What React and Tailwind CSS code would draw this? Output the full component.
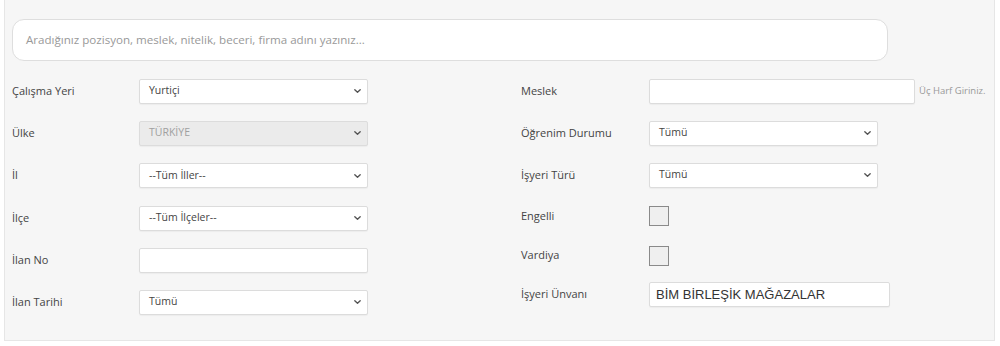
import React from "react";

const font = { fontFamily: '"Open Sans", "Noto Sans", sans-serif' };

function Chevron() {
  return (
    <svg width="9" height="9" viewBox="0 0 10 10" className="pointer-events-none absolute right-[6px] top-1/2 -translate-y-1/2">
      <path d="M2 3.5 L5 6.5 L8 3.5" fill="none" stroke="#555" strokeWidth="1.5" strokeLinecap="round" strokeLinejoin="round" />
    </svg>
  );
}

function Select({ value, width = "w-[229px]", disabled = false }) {
  return (
    <div className={`relative h-[25px] ${width}`}>
      <div
        className={`flex h-full w-full items-center rounded-[2px] border border-[#dcdcdc] pl-[9px] text-[10.5px] shadow-[0_1px_1px_rgba(0,0,0,0.04)] ${
          disabled ? "bg-[#ebebeb] text-[#a0a0a0]" : "bg-white text-[#444]"
        }`}
      >
        {value}
      </div>
      <Chevron />
    </div>
  );
}

function TextInput({ width = "w-[229px]", value = "" }) {
  return (
    <div
      className={`flex h-[25px] ${width} items-center rounded-[2px] border border-[#dcdcdc] bg-white pl-[6px] text-[13px] text-[#333] shadow-[0_1px_1px_rgba(0,0,0,0.04)]`}
      style={value ? { fontFamily: '"Liberation Sans", Arial, sans-serif' } : undefined}
    >
      {value}
    </div>
  );
}

function Check() {
  return <div className="h-[20px] w-[20px] border border-[#8a8a8a] bg-[#efefef]" />;
}

function Row({ label, h, children, labelW }) {
  return (
    <div className={`flex items-center ${h}`}>
      <div className={`${labelW} text-[11px] text-[#444]`}>{label}</div>
      {children}
    </div>
  );
}

export default function App() {
  return (
    <div className="h-[346px] w-[1000px] bg-white" style={font}>
      <div className="ml-[4px] h-[341px] w-[991px] border-x border-b border-[#e6e6e6] bg-[#f6f6f6] pl-[7px] pt-[19px]">
        <div className="flex h-[42px] w-[876px] items-center rounded-[12px] border border-[#dedede] bg-white pl-[13px] text-[11.6px] text-[#999]">
          Aradığınız pozisyon, meslek, nitelik, beceri, firma adını yazınız...
        </div>
        <div className="mt-[9px] flex">
          <div className="flex w-[509px] flex-col">
            <Row label="Çalışma Yeri" h="h-[42px]" labelW="w-[127px]">
              <Select value="Yurtiçi" />
            </Row>
            <Row label="Ülke" h="h-[42px]" labelW="w-[127px]">
              <Select value="TÜRKİYE" disabled />
            </Row>
            <Row label="İl" h="h-[43px]" labelW="w-[127px]">
              <Select value="--Tüm İller--" />
            </Row>
            <Row label="İlçe" h="h-[42px]" labelW="w-[127px]">
              <Select value="--Tüm İlçeler--" />
            </Row>
            <Row label="İlan No" h="h-[42px]" labelW="w-[127px]">
              <TextInput />
            </Row>
            <Row label="İlan Tarihi" h="h-[42px]" labelW="w-[127px]">
              <Select value="Tümü" />
            </Row>
          </div>
          <div className="flex flex-col">
            <Row label="Meslek" h="h-[42px]" labelW="w-[128px]">
              <TextInput width="w-[266px]" />
              <span className="ml-[4px] text-[9.5px] text-[#999]">Üç Harf Giriniz.</span>
            </Row>
            <Row label="Öğrenim Durumu" h="h-[42px]" labelW="w-[128px]">
              <Select value="Tümü" />
            </Row>
            <Row label="İşyeri Türü" h="h-[42px]" labelW="w-[128px]">
              <Select value="Tümü" />
            </Row>
            <Row label="Engelli" h="h-[40px]" labelW="w-[128px]">
              <Check />
            </Row>
            <Row label="Vardiya" h="h-[39px]" labelW="w-[128px]">
              <Check />
            </Row>
            <Row label="İşyeri Ünvanı" h="h-[39px]" labelW="w-[128px]">
              <TextInput width="w-[241px]" value="BİM BİRLEŞİK MAĞAZALAR" />
            </Row>
          </div>
        </div>
      </div>
    </div>
  );
}
